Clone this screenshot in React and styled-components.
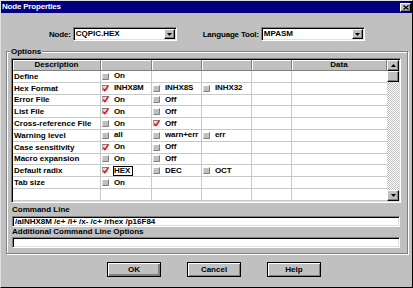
import React from 'react'
import styled, { createGlobalStyle, css } from 'styled-components';

const rows = [
  { label: 'Define', opts: [{ on: false, text: 'On' }] },
  { label: 'Hex Format', opts: [{ on: true, text: 'INHX8M' }, { on: false, text: 'INHX8S' }, { on: false, text: 'INHX32' }] },
  { label: 'Error File', opts: [{ on: true, text: 'On' }, { on: false, text: 'Off' }] },
  { label: 'List File', opts: [{ on: true, text: 'On' }, { on: false, text: 'Off' }] },
  { label: 'Cross-reference File', opts: [{ on: false, text: 'On' }, { on: true, text: 'Off' }] },
  { label: 'Warning level', opts: [{ on: false, text: 'all' }, { on: false, text: 'warn+err' }, { on: false, text: 'err' }] },
  { label: 'Case sensitivity', opts: [{ on: true, text: 'On' }, { on: false, text: 'Off' }] },
  { label: 'Macro expansion', opts: [{ on: false, text: 'On' }, { on: false, text: 'Off' }] },
  { label: 'Default radix', opts: [{ on: true, text: 'HEX', focus: true }, { on: false, text: 'DEC' }, { on: false, text: 'OCT' }] },
  { label: 'Tab size', opts: [{ on: false, text: 'On' }] },
  { label: '', opts: [] },
];

const headers = ['Description', '', '', '', '', 'Data'];

const CheckBox = ({ on }) => (
  <svg width="7" height="7" viewBox="0 0 7 7">
    <rect x="0" y="0" width="7" height="7" fill={on ? '#d8d8d8' : '#c0c0c0'} />
    <path d="M0 6.5V0.5H6.5" stroke={on ? '#808080' : '#fff'} fill="none" />
    <path d="M0.5 6.5H6.5V0.5" stroke={on ? '#fff' : '#808080'} fill="none" />
    {on && <path d="M1.2 3.6L2.8 5.6L6.6 0.4" stroke="#f00" strokeWidth="1.4" fill="none" />}
  </svg>
);

const DownArrow = () => (
  <svg width="5" height="3" viewBox="0 0 5 3"><path d="M0 0H5L2.5 3Z" fill="#000" /></svg>
);

const UpArrow = () => (
  <svg width="5" height="3" viewBox="0 0 5 3"><path d="M0 3H5L2.5 0Z" fill="#000" /></svg>
);

class App extends React.Component {
  render() {
    return (
      <>
        <GlobalStyle />
        <Dialog>
          <TitleBar>
            <TitleText>Node Properties</TitleText>
            <CloseBox>
              <svg width="6" height="5" viewBox="0 0 6 5">
                <path d="M0.5 0.5L5.5 4.5M5.5 0.5L0.5 4.5" stroke="#000" strokeWidth="1.2" />
              </svg>
            </CloseBox>
          </TitleBar>

          <TopRow>
            <FieldGroup>
              <TopLabel>Node:</TopLabel>
              <Combo>
                <span>CQPIC.HEX</span>
                <ComboButton><DownArrow /></ComboButton>
              </Combo>
            </FieldGroup>
            <FieldGroup>
              <TopLabel>Language Tool:</TopLabel>
              <Combo>
                <span>MPASM</span>
                <ComboButton><DownArrow /></ComboButton>
              </Combo>
            </FieldGroup>
          </TopRow>

          <GroupBox>
            <GroupLegend>Options</GroupLegend>
            <GridFrame>
              <Grid>
                {headers.map((h, i) => <HeaderCell key={'h' + i}>{h}</HeaderCell>)}
                {rows.map((r, ri) => (
                  <React.Fragment key={ri}>
                    <Cell>{r.label}</Cell>
                    {[0, 1, 2].map(ci => {
                      const o = r.opts[ci];
                      return (
                        <Cell key={ci}>
                          {o && <CheckBox on={o.on} />}
                          {o && <Value $focus={o.focus}>{o.text}</Value>}
                        </Cell>
                      );
                    })}
                    <Cell />
                    <Cell $last />
                  </React.Fragment>
                ))}
              </Grid>
              <ScrollBar>
                <ScrollButton><UpArrow /></ScrollButton>
                <ScrollButton />
                <ScrollTrack />
                <ScrollButton><DownArrow /></ScrollButton>
              </ScrollBar>
            </GridFrame>

            <FieldLabel $h={13}>Command Line</FieldLabel>
            <TextBox>/aINHX8M /e+ /l+ /x- /c+ /rhex /p16F84</TextBox>
            <FieldLabel $h={10}>Additional Command Line Options</FieldLabel>
            <TextBox />
          </GroupBox>

          <ButtonRow>
            <Button $isDefault>OK</Button>
            <Button>Cancel</Button>
            <Button>Help</Button>
          </ButtonRow>
        </Dialog>
      </>
    )
  }
}

export default App;

const GlobalStyle = createGlobalStyle`
  html, body {
    margin: 0;
    padding: 0;
    background: #c0c0c0;
  }
  body {
    font-family: "Liberation Sans", Arial, sans-serif;
    font-size: 8px;
    font-weight: bold;
    color: #000;
  }
`;

const sunken = css`
  box-sizing: border-box;
  border: 1px solid;
  border-color: #808080 #fff #fff #808080;
  box-shadow: inset 1px 1px 0 #000, inset -1px -1px 0 #dfdfdf;
  padding: 1px;
`;

const raised = css`
  box-sizing: border-box;
  background: #c0c0c0;
  border: 1px solid;
  border-color: #fff #000 #000 #fff;
  box-shadow: inset -1px -1px 0 #808080;
`;

const Dialog = styled.div`
  width: 413px;
  height: 288px;
  box-sizing: border-box;
  background: #c0c0c0;
  border: 1px solid;
  border-color: #dfdfdf #000 #000 #dfdfdf;
  display: flex;
  flex-direction: column;
  overflow: hidden;
`;

const TitleBar = styled.div`
  height: 12px;
  flex-shrink: 0;
  background: #000080;
  color: #fff;
  display: flex;
  align-items: center;
  justify-content: space-between;
  padding: 0 1px 0 1px;
`;

const TitleText = styled.span`
  line-height: 12px;
  letter-spacing: -0.2px;
`;

const CloseBox = styled.div`
  ${raised};
  width: 11px;
  height: 9px;
  display: flex;
  align-items: center;
  justify-content: center;
`;

const TopRow = styled.div`
  display: flex;
  align-items: center;
  margin-top: 14px;
  padding-left: 48px;
  gap: 26px;
`;

const FieldGroup = styled.div`
  display: flex;
  align-items: center;
  gap: 2px;
`;

const TopLabel = styled.span`
  white-space: nowrap;
  letter-spacing: -0.2px;
`;

const Combo = styled.div`
  ${sunken};
  width: 104px;
  height: 14px;
  background: #fff;
  display: flex;
  align-items: center;
  justify-content: space-between;
  padding: 1px 1px 1px 2px;
  line-height: 10px;
`;

const ComboButton = styled.div`
  ${raised};
  width: 11px;
  height: 10px;
  display: flex;
  align-items: center;
  justify-content: center;
`;

const GroupBox = styled.div`
  position: relative;
  margin: 10px 4px 0 5px;
  border: 1px solid #808080;
  box-shadow: 1px 1px 0 #fff, inset 1px 1px 0 #fff;
  padding: 6px 6px 5px 4px;
`;

const GroupLegend = styled.span`
  position: absolute;
  top: -6px;
  left: 3px;
  padding: 0 1px;
  background: #c0c0c0;
  line-height: 11px;
`;

const GridFrame = styled.div`
  ${sunken};
  height: 145px;
  display: flex;
`;

const Grid = styled.div`
  flex: 1;
  display: grid;
  grid-template-columns: 88px 51px 50px 50px 40px 1fr;
  grid-template-rows: 11px repeat(11, 11.8px);
  background: #fff;
  overflow: hidden;
`;

const HeaderCell = styled.div`
  box-sizing: border-box;
  background: #c0c0c0;
  border-right: 1px solid #808080;
  border-bottom: 1px solid #808080;
  box-shadow: inset 1px 1px 0 #fff;
  text-align: center;
  line-height: 10px;
`;

const Cell = styled.div`
  box-sizing: border-box;
  border-right: ${p => (p.$last ? 'none' : '1px solid #c8c8c8')};
  border-bottom: 1px solid #c8c8c8;
  display: flex;
  align-items: center;
  padding-left: 1px;
  white-space: nowrap;
  overflow: hidden;
`;

const Value = styled.span`
  margin-left: ${p => (p.$focus ? '4px' : '5px')};
  line-height: 8px;
  letter-spacing: -0.1px;
  ${p => p.$focus && css`
    border: 1px solid #000;
    padding: 0 2px 0 0;
  `}
`;

const ScrollBar = styled.div`
  width: 12px;
  display: flex;
  flex-direction: column;
  background: repeating-conic-gradient(#c0c0c0 0 25%, #fff 0 50%) 0 0 / 2px 2px;
`;

const ScrollButton = styled.div`
  ${raised};
  height: 11px;
  flex-shrink: 0;
  display: flex;
  align-items: center;
  justify-content: center;
`;

const ScrollTrack = styled.div`
  flex: 1;
`;

const FieldLabel = styled.div`
  height: ${p => p.$h}px;
  line-height: ${p => p.$h}px;
  padding-left: 1px;
`;

const TextBox = styled.div`
  ${sunken};
  height: 11px;
  margin: 0 1px;
  background: #fff;
  padding: 0 0 0 2px;
  line-height: 9px;
  white-space: nowrap;
`;

const ButtonRow = styled.div`
  display: flex;
  gap: 26px;
  margin-top: 8px;
  padding-left: 106px;
`;

const Button = styled.button`
  ${raised};
  width: 54px;
  height: 15px;
  padding: 0;
  border-color: #000;
  box-shadow: inset 1px 1px 0 #fff, inset ${p => (p.$isDefault ? '-2px -2px' : '-1px -1px')} 0 #808080;
  font: inherit;
  color: #000;
`;
